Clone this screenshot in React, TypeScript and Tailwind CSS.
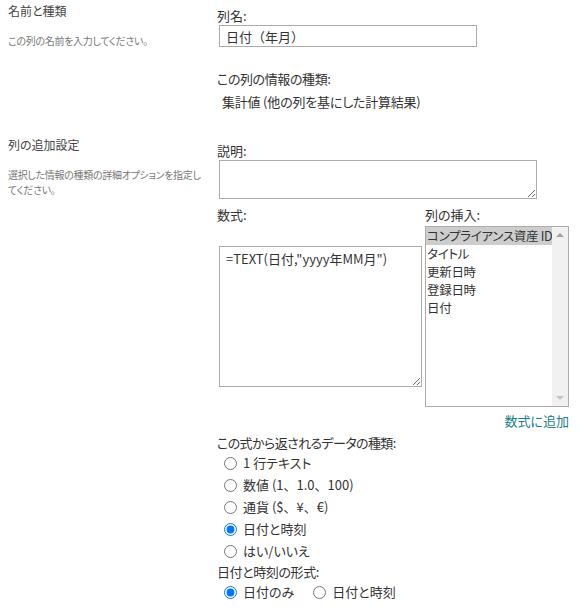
const typeOptions = [
  { id: "text", label: "1 行テキスト" },
  { id: "number", label: "数値 (1、1.0、100)" },
  { id: "currency", label: "通貨 ($、¥、€)" },
  { id: "datetime", label: "日付と時刻" },
  { id: "boolean", label: "はい/いいえ" },
];

const columns = ["コンプライアンス資産 ID", "タイトル", "更新日時", "登録日時", "日付"];

function Radio({ name, checked, label }: { name: string; checked?: boolean; label: string }) {
  // 、を全角幅のまま表示したいので palt を外す
  const plain = label.includes("、");
  return (
    <label className="flex h-[22px] items-center">
      <input
        type="radio"
        name={name}
        defaultChecked={checked}
        className="m-0 ml-[7px] mr-[6px] h-[13px] w-[13px]"
      />
      <span className={plain ? "[font-feature-settings:normal]" : ""}>{label}</span>
    </label>
  );
}

export default function App() {
  return (
    <div className="h-[608px] w-[584px] overflow-hidden bg-white font-['Noto_Sans_CJK_JP',sans-serif] text-[13px] leading-[18px] text-[#333] [font-feature-settings:'palt']">
      {/* 名前と種類 */}
      <div className="flex">
        <div className="w-[209px] shrink-0 pl-2 pt-[3px]">
          <h3 className="text-[12px] leading-[16px] text-[#444]">名前と種類</h3>
          <p className="mt-[14px] text-[10px] leading-[15px] tracking-[-0.3px] text-[#777]">
            この列の名前を入力してください。
          </p>
        </div>
        <div className="flex-1 pb-[19px] pl-2 pt-[7px]">
          <div>列名:</div>
          <input
            defaultValue="日付（年月）"
            className="ml-[2px] block h-[22px] w-[258px] border border-[#ababab] px-[6px] text-[13px] text-[#333] outline-none [font-feature-settings:normal]"
          />
          <div className="mt-[23px] tracking-[-0.4px]">この列の情報の種類:</div>
          <div className="ml-[5px] mt-[5px] tracking-[-0.2px]">集計値 (他の列を基にした計算結果)</div>
        </div>
      </div>

      {/* 列の追加設定 */}
      <div className="flex">
        <div className="w-[209px] shrink-0 pl-2 pt-[7px]">
          <h3 className="text-[12px] leading-[16px] text-[#444]">列の追加設定</h3>
          <p className="mt-[14px] w-[198px] text-[10px] leading-[15px] tracking-[-0.3px] text-[#777]">
            選択した情報の種類の詳細オプションを指定してください。
          </p>
        </div>
        <div className="flex-1 pl-2 pt-[12px]">
          <div>説明:</div>
          <textarea className="ml-[2px] block h-[39px] w-[318px] border border-[#ababab] px-[6px] text-[13px] outline-none" />

          <div className="ml-[2px] mt-[7px] w-[350px]">
            <div className="flex gap-[3px]">
              <div className="w-[203px]">
                <div className="-ml-[2px]">数式:</div>
                <textarea
                  defaultValue={'=TEXT(日付,"yyyy年MM月")'}
                  className="mt-[22px] block h-[141px] w-[203px] border border-[#ababab] px-[6px] pt-[3px] text-[13px] leading-[18px] text-[#333] outline-none"
                />
              </div>
              <div className="w-[144px]">
                <div>列の挿入:</div>
                <div className="mt-[2px] flex h-[181px] border border-[#ababab]">
                  <ul className="min-w-0 flex-1 overflow-hidden">
                    {columns.map((c, i) => (
                      <li
                        key={c}
                        className={
                          "h-[18px] whitespace-nowrap pl-[1px] text-[12.5px] tracking-[-0.3px] " +
                          (i === 0 ? "bg-[#cdcdcd]" : "")
                        }
                      >
                        {c}
                      </li>
                    ))}
                  </ul>
                  <div className="flex w-[16px] shrink-0 flex-col items-center justify-between bg-[#f1f1f1] py-[6px]">
                    <span className="h-0 w-0 border-x-[4px] border-b-[4px] border-x-transparent border-b-[#a3a3a3]" />
                    <span className="h-0 w-0 border-x-[4px] border-t-[4px] border-x-transparent border-t-[#c4c4c4]" />
                  </div>
                </div>
              </div>
            </div>
            <div className="mt-[5px] text-right text-[#197d87]">数式に追加</div>
          </div>

          <div className="mt-[4px] tracking-[-0.6px]">この式から返されるデータの種類:</div>
          {typeOptions.map((o) => (
            <Radio key={o.id} name="resultType" label={o.label} checked={o.id === "datetime"} />
          ))}
          <div className="mt-[1px] tracking-[-0.4px]">日付と時刻の形式:</div>
          <div className="flex">
            <Radio name="dateFormat" label="日付のみ" checked />
            <div className="ml-[12px]">
              <Radio name="dateFormat" label="日付と時刻" />
            </div>
          </div>
        </div>
      </div>
    </div>
  );
}
